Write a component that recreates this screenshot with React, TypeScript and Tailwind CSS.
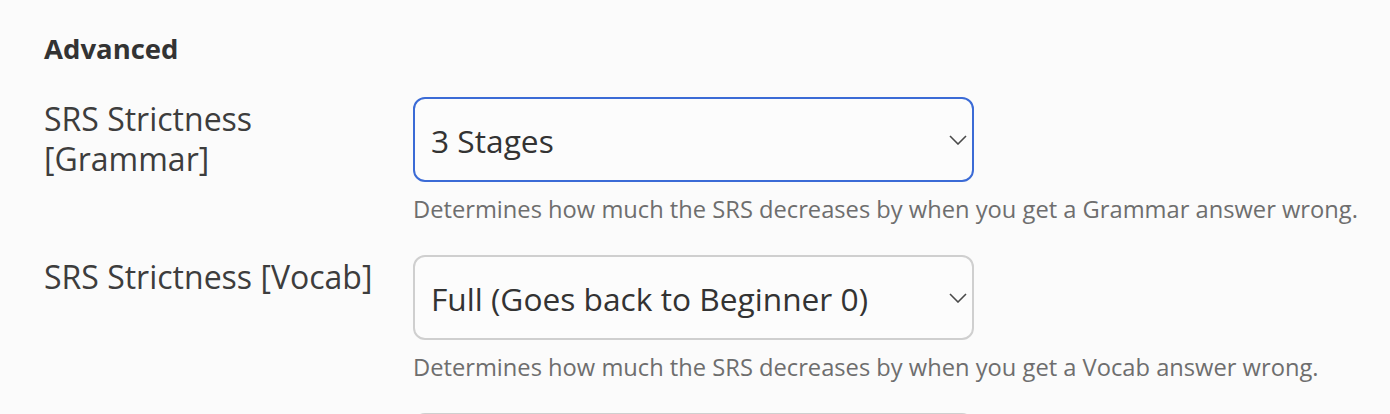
interface Setting {
  label: string;
  value: string;
  help: string;
  focused?: boolean;
}

const settings: Setting[] = [
  {
    label: "SRS Strictness [Grammar]",
    value: "3 Stages",
    help: "Determines how much the SRS decreases by when you get a Grammar answer wrong.",
    focused: true,
  },
  {
    label: "SRS Strictness [Vocab]",
    value: "Full (Goes back to Beginner 0)",
    help: "Determines how much the SRS decreases by when you get a Vocab answer wrong.",
  },
];

function SelectBox({ value, focused }: { value: string; focused?: boolean }) {
  return (
    <div
      className={`flex h-[85px] items-center justify-between rounded-[12px] border-2 bg-[#fcfcfc] pl-[16px] pr-[5px] ${
        focused ? "border-[#3b6bd6]" : "border-[#cfcfcf]"
      }`}
    >
      <span className="pt-[3px] text-[31.7px] leading-none text-[#333333]">{value}</span>
      <svg width="18" height="10" viewBox="0 0 18 10" fill="none" className="text-[#4a4a4a]">
        <path d="M1 1l8 8 8-8" stroke="currentColor" strokeWidth="1.6" />
      </svg>
    </div>
  );
}

export default function App() {
  return (
    <div
      className="h-screen overflow-hidden bg-[#fbfbfb] pl-[44px] pt-[31px]"
      style={{ fontFamily: "'Open Sans', 'Noto Sans', sans-serif" }}
    >
      <h3 className="text-[27.5px] font-bold leading-[36px] text-[#333333]">Advanced</h3>
      <div className="mt-[30px] flex flex-col gap-[29px]">
        {settings.map((s, idx) => (
          <div key={idx} className="grid grid-cols-[369px_561px]">
            <label className="pr-[10px] pt-[2px] text-[32px] leading-[40px] text-[#3d3d3d]">
              {s.label}
            </label>
            <div>
              <SelectBox value={s.value} focused={s.focused} />
              <p className="mt-[10px] whitespace-nowrap text-[23.7px] leading-[34px] text-[#6e6e6e]">
                {s.help}
              </p>
            </div>
          </div>
        ))}
        <div className="grid grid-cols-[369px_561px]">
          <div />
          <div className="h-[84px] rounded-[12px] border-2 border-[#cfcfcf] bg-[#fcfcfc]" />
        </div>
      </div>
    </div>
  );
}
